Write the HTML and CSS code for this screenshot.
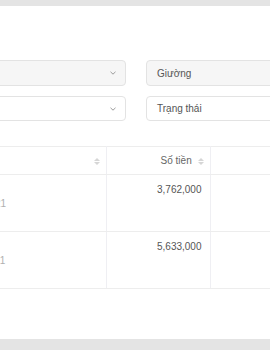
FILE: index.html
```html
<!DOCTYPE html>
<html lang="vi">
<head>
    <meta charset="UTF-8">
    <meta name="viewport" content="width=device-width, initial-scale=1.0">
    <title>Danh sách thanh toán</title>
    <link rel="stylesheet" href="styles.css">
</head>
<body>
    <div class="card">
        <div class="filters">
            <div class="select disabled">
                <span class="select-text">Tòa</span>
                <svg class="chevron" width="6" height="4" viewBox="0 0 6 4"><path d="M0.5 0.8 L3 3.2 L5.5 0.8" fill="none" stroke="#9a9a9a" stroke-width="1"/></svg>
            </div>
            <div class="select disabled">
                <span class="select-text">Giường</span>
            </div>
            <div class="select">
                <span class="select-text">Kỳ</span>
                <svg class="chevron" width="6" height="4" viewBox="0 0 6 4"><path d="M0.5 0.8 L3 3.2 L5.5 0.8" fill="none" stroke="#9a9a9a" stroke-width="1"/></svg>
            </div>
            <div class="select">
                <span class="select-text">Trạng thái</span>
            </div>
        </div>

        <table class="data-table">
            <colgroup>
                <col class="col-info">
                <col class="col-amount">
                <col class="col-status">
            </colgroup>
            <thead>
                <tr>
                    <th class="th-left">
                        <span class="sorter"><i class="up"></i><i class="down"></i></span>
                    </th>
                    <th class="th-right">
                        <span class="th-label">Số tiền</span>
                        <span class="sorter"><i class="up"></i><i class="down"></i></span>
                    </th>
                    <th></th>
                </tr>
            </thead>
            <tbody>
                <tr>
                    <td>
                        <div class="main-line">A1</div>
                        <div class="sub-line">12/2021</div>
                    </td>
                    <td class="amount">3,762,000</td>
                    <td></td>
                </tr>
                <tr>
                    <td>
                        <div class="main-line">B2</div>
                        <div class="sub-line">11/2021</div>
                    </td>
                    <td class="amount">5,633,000</td>
                    <td></td>
                </tr>
            </tbody>
        </table>
    </div>
</body>
</html>
```

FILE: styles.css
```css
* {
  box-sizing: border-box;
  margin: 0;
  padding: 0;
}

body {
  background: #e4e4e4;
  font-family: 'Liberation Sans', Arial, sans-serif;
  font-size: 10px;
  color: #555;
  padding-top: 6px;
  overflow: hidden;
}

.card {
  background: #fff;
  height: 333px;
  padding-top: 54px;
  overflow: hidden;
}

.filters {
  display: grid;
  grid-template-columns: 166px 166px;
  grid-template-rows: 26px 25px;
  gap: 10px 20px;
  margin-left: -40px;
}

.select {
  display: flex;
  align-items: center;
  justify-content: space-between;
  padding: 0 9px 0 10px;
  border: 1px solid #e3e3e3;
  border-radius: 4px;
  background: #fff;
  color: #555;
}

.select.disabled {
  background: #f6f6f6;
}

.chevron {
  display: block;
}

.data-table {
  margin-top: 25px;
  margin-left: -40px;
  width: 370px;
  border-collapse: collapse;
  table-layout: fixed;
}

.col-info {
  width: 146px;
}

.col-amount {
  width: 104px;
}

.col-status {
  width: 120px;
}

.data-table th,
.data-table td {
  border-top: 1px solid #ededed;
  border-bottom: 1px solid #ededed;
  border-right: 1px solid #efeff3;
}

.data-table th {
  height: 28px;
  font-weight: normal;
  color: #666;
  padding: 0 6px 0 10px;
}

.th-left {
  text-align: right;
}

.th-right {
  text-align: right;
}

.sorter {
  display: inline-flex;
  flex-direction: column;
  gap: 1px;
  vertical-align: middle;
  margin-left: 3px;
}

.sorter i {
  display: block;
  width: 0;
  height: 0;
  border-left: 3px solid transparent;
  border-right: 3px solid transparent;
}

.sorter .up {
  border-bottom: 3px solid #d6d6d6;
}

.sorter .down {
  border-top: 3px solid #d6d6d6;
}

.data-table td {
  height: 57px;
  vertical-align: top;
  padding: 8px 8px 0 10px;
  line-height: 14px;
}

.main-line {
  color: #555;
}

.sub-line {
  color: #b0b0b0;
}

.amount {
  text-align: right;
}
```
